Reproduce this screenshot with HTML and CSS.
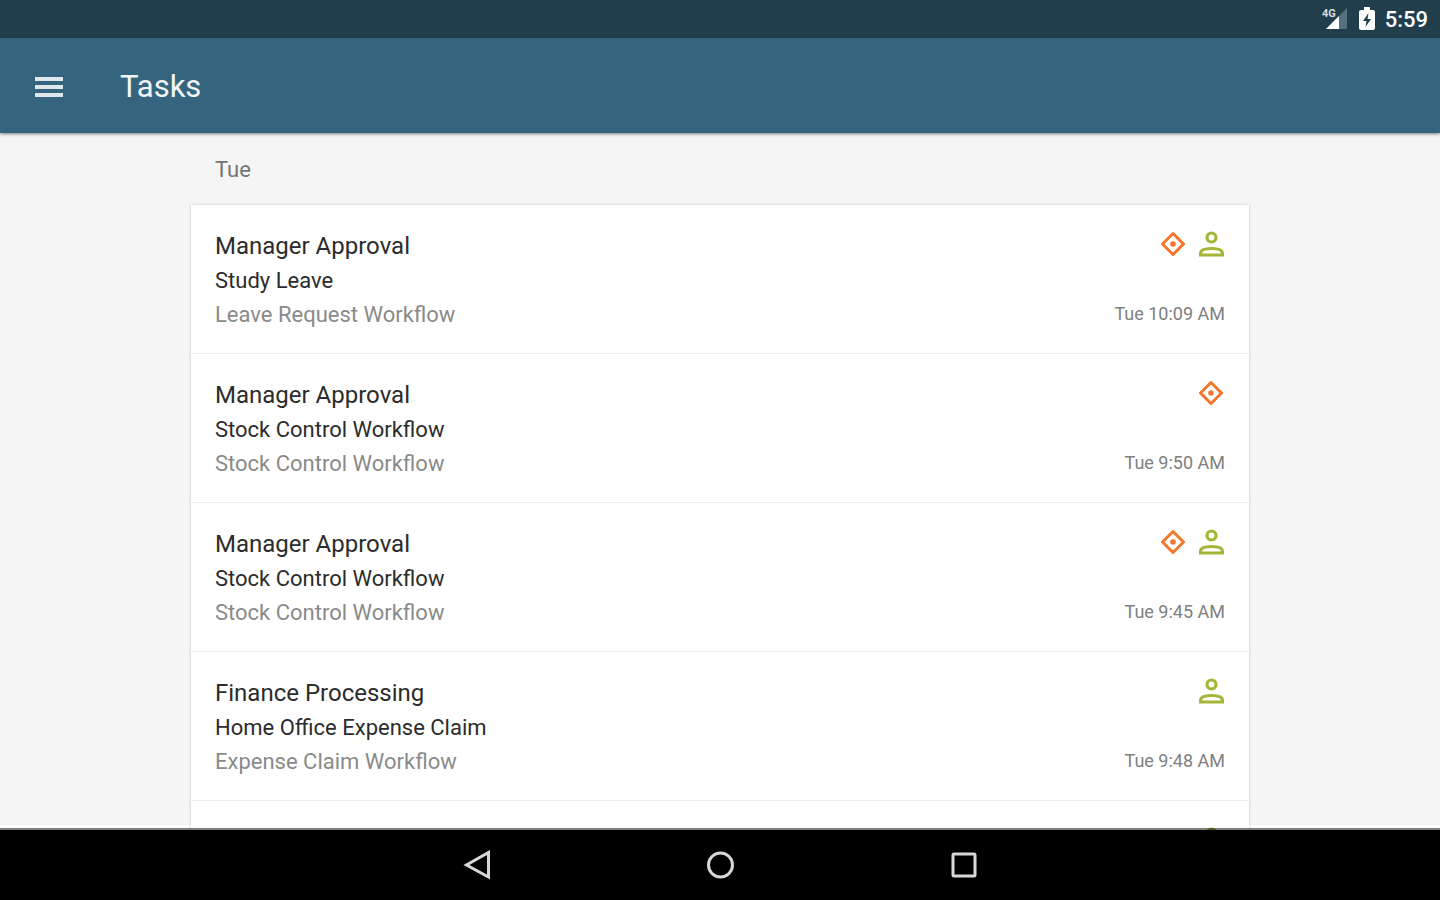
FILE: index.html
```
<!DOCTYPE html>
<html lang="en">
	<head>
		<title>Tasks</title><meta charset="utf-8">
		<link rel="stylesheet" href="styles.css">
	</head>
	<body>
		<!-- shared icons -->
		<svg class="sprite" aria-hidden="true">
			<symbol id="priority" viewBox="0 0 26 26">
				<path d="M12 2.500 L22.500 13 L12 23.500 L1.500 13 Z" fill="none" stroke="#f3762b" stroke-width="3" stroke-linejoin="round"/>
				<circle cx="12" cy="13" r="2.8" fill="#f3762b"/>
			</symbol>
			<symbol id="person" viewBox="0 0 26 26">
				<circle cx="12.500" cy="6.500" r="4.500" fill="none" stroke="#a5b536" stroke-width="3.200"/>
				<path d="M1.600 24 V22 C1.600 18.500 6.500 17.500 12.500 17.500 S23.400 18.500 23.400 22 V24 Z" fill="none" stroke="#a5b536" stroke-width="3.200"/>
			</symbol>
		</svg>
		<div class="status">
			<svg width="26" height="24" viewBox="0 0 26 24">
				<path d="M26 1 V22 H5 Z" fill="#56707e"/>
				<path d="M18 9 V22 H5 Z" fill="#fff"/>
				<text class="network" x="1" y="10">4G</text>
			</svg>
			<svg width="16" height="24" viewBox="0 0 16 24">
				<path d="M5 0 H11 V3 H14 Q16 3 16 5 V21 Q16 23 14 23 H2 Q0 23 0 21 V5 Q0 3 2 3 H5 Z" fill="#fff"/>
				<path d="M9.500 6 L4 14 H7.500 L6.500 20 L12 12 H8.500 Z" fill="#213e4d"/>
			</svg>
			<span class="clock">5:59</span>
		</div>
		<header class="toolbar">
			<button class="menu" aria-label="Menu">
				<svg width="30" height="22" viewBox="0 0 30 22"><path d="M1 3 H29 M1 11 H29 M1 19 H29" stroke="#dfe8ee" stroke-width="4"/></svg>
			</button>
			<h1>Tasks</h1>
		</header>
		<main>
			<h2>Tue</h2>
			<ul class="tasks">
				<li>
					<div class="info"><h3>Manager Approval</h3><p>Study Leave</p><p class="flow">Leave Request Workflow</p></div>
					<div class="side">
						<div class="icons"><svg><use href="#priority"/></svg><svg><use href="#person"/></svg></div>
						<time>Tue 10:09 AM</time>
					</div>
				</li>
				<li>
					<div class="info"><h3>Manager Approval</h3><p>Stock Control Workflow</p><p class="flow">Stock Control Workflow</p></div>
					<div class="side">
						<div class="icons"><svg><use href="#priority"/></svg></div>
						<time>Tue 9:50 AM</time>
					</div>
				</li>
				<li>
					<div class="info"><h3>Manager Approval</h3><p>Stock Control Workflow</p><p class="flow">Stock Control Workflow</p></div>
					<div class="side">
						<div class="icons"><svg><use href="#priority"/></svg><svg><use href="#person"/></svg></div>
						<time>Tue 9:45 AM</time>
					</div>
				</li>
				<li>
					<div class="info"><h3>Finance Processing</h3><p>Home Office Expense Claim</p><p class="flow">Expense Claim Workflow</p></div>
					<div class="side">
						<div class="icons"><svg><use href="#person"/></svg></div>
						<time>Tue 9:48 AM</time>
					</div>
				</li>
				<li>
					<div class="info"></div>
					<div class="side">
						<div class="icons"><svg><use href="#person"/></svg></div>
					</div>
				</li>
			</ul>
		</main>
		<nav>
			<button aria-label="Back"><svg viewBox="0 0 30 30"><path d="M26.500 2.500 V27 L4.500 15 Z"/></svg></button>
			<button aria-label="Home"><svg viewBox="0 0 30 30"><circle cx="15.500" cy="15" r="12"/></svg></button>
			<button aria-label="Recent apps"><svg viewBox="0 0 30 30"><rect x="5" y="4" width="22" height="22" rx="1"/></svg></button>
		</nav>
	</body>
</html>
```
FILE: styles.css
```
* {box-sizing: border-box;}
body {margin: 0; height: 100vh; display: flex; flex-direction: column; font-family: Roboto, sans-serif; background-color: #f5f5f5;}
h1, h2, h3, p, ul {margin: 0; padding: 0; font-weight: 400;}
button {border: 0; padding: 0; background: none; cursor: pointer;}
svg {display: block;}
.sprite {display: none;}

.status {height: 38px; flex: none; display: flex; align-items: center; justify-content: flex-end; gap: 12px; padding-right: 12px; background-color: #213e4d; color: #fff;}
.network {font-size: 11px; font-weight: 700; fill: #d5dde1;}
.clock {font-size: 22px; font-weight: 500; line-height: 24px; margin-left: -2px; padding-top: 2px;}

.toolbar {height: 95px; flex: none; display: flex; align-items: center; gap: 56px; padding: 2px 34px 0; background-color: #35647e; color: #f1f5f7; box-shadow: 0 1px 3px rgba(0,0,0,0.5); z-index: 1;}
.toolbar h1 {font-size: 31px; line-height: 40px;}

/* white strip just above the navigation bar */
main {flex: 1; min-height: 0; overflow: hidden; padding: 24px 24px 0; background: linear-gradient(#fff, #fff) bottom / 100% 5px no-repeat;}
h2 {max-width: 1058px; margin: 0 auto 22px; padding: 0 24px; font-size: 22px; line-height: 26px; color: #757575;}
.tasks {max-width: 1058px; margin: 0 auto; list-style: none; background-color: #fff; box-shadow: 0 0 3px rgba(0,0,0,0.2);}
.tasks li {height: 149px; display: flex; justify-content: space-between; padding: 24px 24px 22px; border-bottom: 1px solid #ececec;}
.info {color: #2c2c2c;}
.info h3 {font-size: 24px; line-height: 35px;}
.info p {font-size: 22px; line-height: 34px;}
.info .flow {color: #8a8a8a;}
.side {display: flex; flex-direction: column; align-items: flex-end; justify-content: space-between;}
.icons {display: flex; gap: 12px; padding-top: 2px;}
.icons svg {width: 26px; height: 26px;}
.side time {font-size: 18px; line-height: 34px; color: #808080;}

/* the see-through top border lies over the end of the list */
nav {height: 72px; flex: none; display: flex; align-items: center; justify-content: center; gap: 213px; margin-top: -2px; background: #000 padding-box; border-top: 2px solid rgba(0,0,0,0.5); z-index: 1;}
nav svg {width: 30px; height: 30px; fill: none; stroke: #d8d8d8; stroke-width: 3;}
```
